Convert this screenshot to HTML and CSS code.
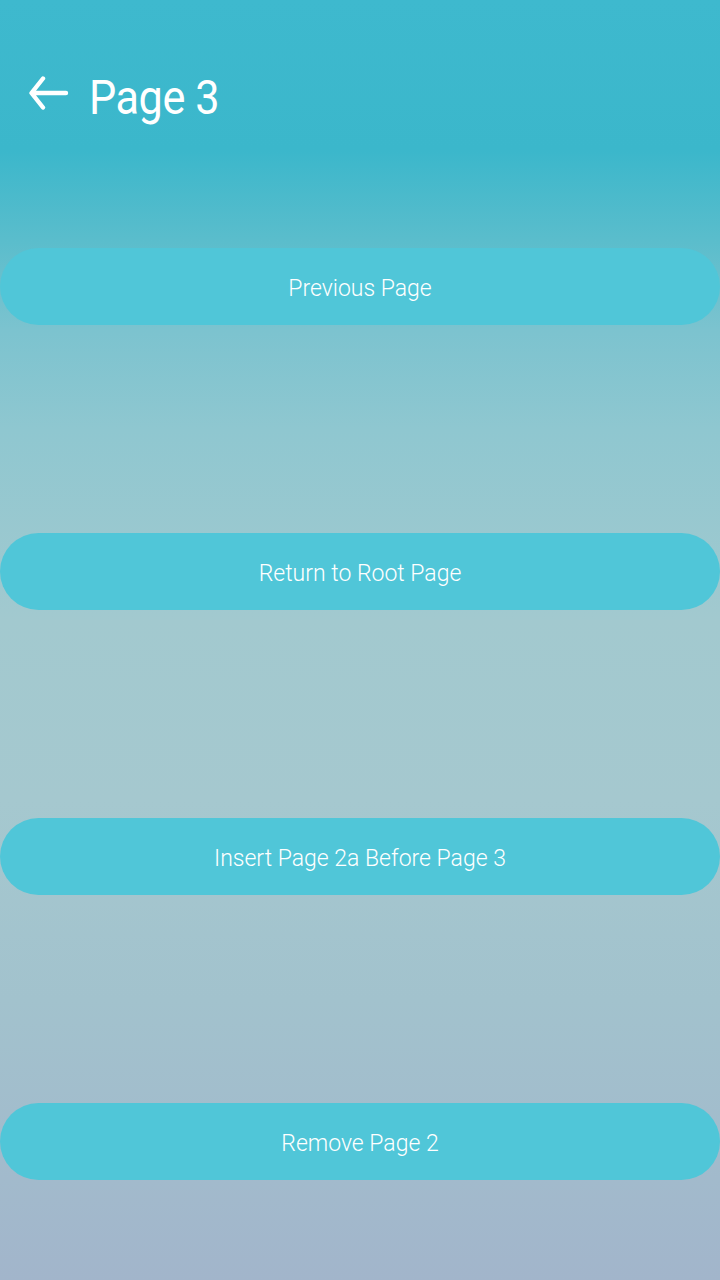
FILE: index.html
```html
<!DOCTYPE html>
<html>
<head>
<meta charset="utf-8">
<link rel="stylesheet" href="styles.css">
</head>
<body>
<div class="screen">
  <header class="header">
    <svg class="back" width="40" height="36" viewBox="0 0 40 36">
      <path d="M14 2.5 L2.5 17 L14 31.5 M3 17 L37 17" fill="none" stroke="#fff" stroke-width="4.4" stroke-linecap="round" stroke-linejoin="round"/>
    </svg>
    <h1 class="title">Page 3</h1>
  </header>
  <main class="buttons">
    <button class="btn">Previous Page</button>
    <button class="btn">Return to Root Page</button>
    <button class="btn">Insert Page 2a Before Page 3</button>
    <button class="btn">Remove Page 2</button>
  </main>
</div>
</body>
</html>
```

FILE: styles.css
```css
html, body {
  margin: 0;
  padding: 0;
}
body {
  width: 720px;
  height: 1280px;
  overflow: hidden;
  font-family: Roboto, "Noto Sans", sans-serif;
}
.screen {
  width: 720px;
  height: 1280px;
  display: flex;
  flex-direction: column;
  background: linear-gradient(to bottom,
    #3eb9ce 0px,
    #3bb7cb 150px,
    #5abdcc 240px,
    #7cc3cf 330px,
    #8fc7d0 430px,
    #a2c9cf 620px,
    #a5c8cf 800px,
    #a2c2cd 1000px,
    #a2bacc 1180px,
    #a2b5cb 1280px);
}
.header {
  height: 190px;
  display: flex;
  align-items: center;
  padding-left: 29px;
  box-sizing: border-box;
  gap: 20px;
}
.back {
  display: block;
  margin-top: -3px;
}
.title {
  margin: 0;
  padding-top: 4px;
  color: #fff;
  font-weight: 400;
  font-size: 48px;
  letter-spacing: -0.5px;
  transform: scaleX(0.9);
  transform-origin: left center;
}
.buttons {
  display: flex;
  flex-direction: column;
  gap: 208px;
  padding-top: 58px;
}
.btn {
  height: 77px;
  width: 720px;
  border: none;
  border-radius: 39px;
  background: #50c6d8;
  color: #fff;
  font-family: Roboto, "Noto Sans", sans-serif;
  font-weight: 300;
  font-size: 23px;
  padding: 4px 0 0 0;
  margin: 0;
}
```
